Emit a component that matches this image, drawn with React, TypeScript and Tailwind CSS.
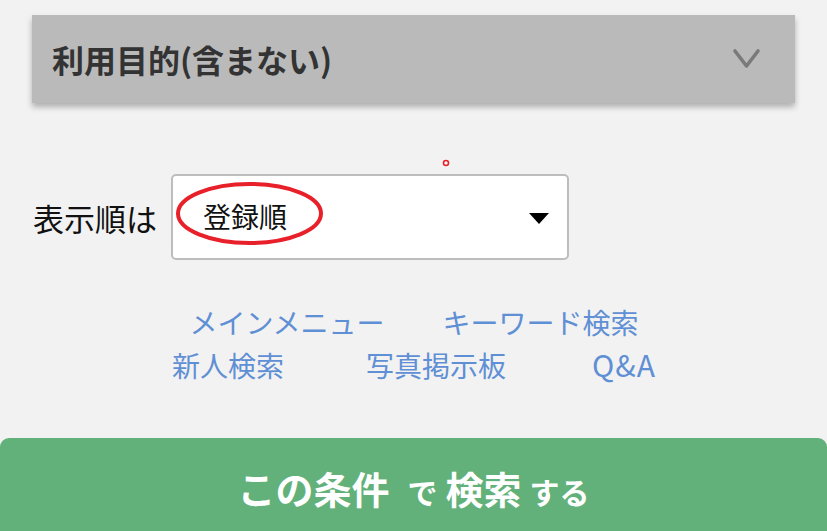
import React from "react";

export default function App() {
  return (
    <div className="relative w-[827px] h-[531px] overflow-hidden bg-[#f2f2f2] font-['Noto_Sans_CJK_JP','Noto_Sans',sans-serif]">
      <div className="pt-[15px]">
        {/* accordion bar */}
        <div className="mx-[32px] h-[88px] bg-[#bababa] shadow-[0_4px_6px_rgba(0,0,0,0.28)] flex items-center justify-between pl-[20px] pr-[33px]">
          <span className="text-[32px] font-bold leading-none text-[#333333] -mt-[1px]">利用目的(含まない)</span>
          <svg width="30" height="24" viewBox="0 0 30 24" className="block">
            <polyline points="3,4 14.5,19 26,4" fill="none" stroke="#7a7a7a" strokeWidth="3.6" strokeLinecap="round" strokeLinejoin="round" />
          </svg>
        </div>

        {/* sort row */}
        <div className="mt-[71px] flex items-center pl-[33px] gap-[14px]">
          <span className="text-[31px] leading-none text-[#111111]">表示順は</span>
          <div className="relative w-[398px] h-[86px] bg-white border-2 border-[#bdbdbd] rounded-[5px] flex items-center justify-between pl-[30px] pr-[18px]">
            <span className="text-[28px] leading-none text-[#111111] -mt-[2px]">登録順</span>
            <svg width="20" height="12" viewBox="0 0 20 12" className="block mt-[4px]">
              <polygon points="0,0 20,0 10,11" fill="#000000" />
            </svg>
            <svg width="147" height="63" viewBox="0 0 147 63" className="absolute left-[3px] top-[6px] pointer-events-none">
              <ellipse cx="73.5" cy="31.5" rx="71.5" ry="29.5" fill="none" stroke="#e8202a" strokeWidth="4" />
            </svg>
          </div>
        </div>

        {/* links */}
        <div className="mt-[41px] flex flex-col items-center text-[28px] leading-[42px] text-[#5f8fd4]">
          <div className="flex gap-[58px] pl-[1px]">
            <span>メインメニュー</span>
            <span>キーワード検索</span>
          </div>
          <div className="flex items-baseline pl-[1px]">
            <span>新人検索</span>
            <span className="ml-[82px]">写真掲示板</span>
            <span className="ml-[86px] text-[30px] tracking-[1px]">Q&amp;A</span>
          </div>
        </div>

        {/* button */}
        <div className="mt-[52px] h-[102px] bg-[#62b17a] rounded-[9px] flex items-center justify-center text-white font-bold">
          <div className="flex items-baseline pb-[2px]">
            <span className="text-[38px] leading-none">この条件</span>
            <span className="text-[30px] leading-none ml-[18px]">で</span>
            <span className="text-[38px] leading-none ml-[8px]">検索</span>
            <span className="text-[30px] leading-none ml-[8px]">する</span>
          </div>
        </div>
      </div>

      {/* small red marker */}
      <svg width="8" height="8" viewBox="0 0 8 8" className="absolute left-[442px] top-[159px]">
        <circle cx="4" cy="4" r="2.5" fill="#ffffff" stroke="#e8202a" strokeWidth="1.6" />
      </svg>
    </div>
  );
}
